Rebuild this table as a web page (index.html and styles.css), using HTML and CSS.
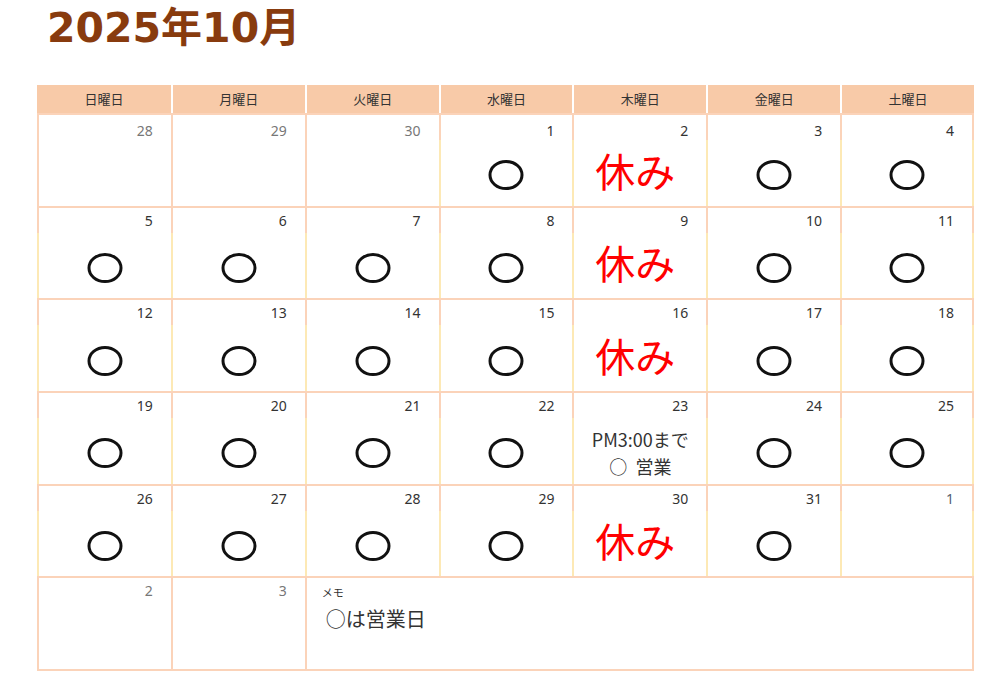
FILE: index.html
```html
<!DOCTYPE html>
<html lang="ja">
<head>
<meta charset="utf-8">
<title>2025年10月</title>
<link rel="stylesheet" href="styles.css">
</head>
<body>
<div class="page">
  <h1 class="title">2025年10月</h1>
  <div class="cal">
    <div class="hd">日曜日</div><div class="hd">月曜日</div><div class="hd">火曜日</div><div class="hd">水曜日</div><div class="hd">木曜日</div><div class="hd">金曜日</div><div class="hd">土曜日</div>

    <div class="cell other w1"><div class="date">28</div></div>
    <div class="cell other w1"><div class="date">29</div></div>
    <div class="cell other w1"><div class="date">30</div></div>
    <div class="cell cur w1"><div class="date">1</div><div class="body"><svg class="maru" viewBox="0 0 38 32"><ellipse cx="19" cy="16" rx="16" ry="13.5"/></svg></div></div>
    <div class="cell cur w1"><div class="date">2</div><div class="body"><span class="off">休み</span></div></div>
    <div class="cell cur w1"><div class="date">3</div><div class="body"><svg class="maru" viewBox="0 0 38 32"><ellipse cx="19" cy="16" rx="16" ry="13.5"/></svg></div></div>
    <div class="cell cur last w1"><div class="date">4</div><div class="body"><svg class="maru" viewBox="0 0 38 32"><ellipse cx="19" cy="16" rx="16" ry="13.5"/></svg></div></div>

    <div class="cell cur"><div class="date">5</div><div class="body"><svg class="maru" viewBox="0 0 38 32"><ellipse cx="19" cy="16" rx="16" ry="13.5"/></svg></div></div>
    <div class="cell cur"><div class="date">6</div><div class="body"><svg class="maru" viewBox="0 0 38 32"><ellipse cx="19" cy="16" rx="16" ry="13.5"/></svg></div></div>
    <div class="cell cur"><div class="date">7</div><div class="body"><svg class="maru" viewBox="0 0 38 32"><ellipse cx="19" cy="16" rx="16" ry="13.5"/></svg></div></div>
    <div class="cell cur"><div class="date">8</div><div class="body"><svg class="maru" viewBox="0 0 38 32"><ellipse cx="19" cy="16" rx="16" ry="13.5"/></svg></div></div>
    <div class="cell cur"><div class="date">9</div><div class="body"><span class="off">休み</span></div></div>
    <div class="cell cur"><div class="date">10</div><div class="body"><svg class="maru" viewBox="0 0 38 32"><ellipse cx="19" cy="16" rx="16" ry="13.5"/></svg></div></div>
    <div class="cell cur last"><div class="date">11</div><div class="body"><svg class="maru" viewBox="0 0 38 32"><ellipse cx="19" cy="16" rx="16" ry="13.5"/></svg></div></div>

    <div class="cell cur"><div class="date">12</div><div class="body"><svg class="maru" viewBox="0 0 38 32"><ellipse cx="19" cy="16" rx="16" ry="13.5"/></svg></div></div>
    <div class="cell cur"><div class="date">13</div><div class="body"><svg class="maru" viewBox="0 0 38 32"><ellipse cx="19" cy="16" rx="16" ry="13.5"/></svg></div></div>
    <div class="cell cur"><div class="date">14</div><div class="body"><svg class="maru" viewBox="0 0 38 32"><ellipse cx="19" cy="16" rx="16" ry="13.5"/></svg></div></div>
    <div class="cell cur"><div class="date">15</div><div class="body"><svg class="maru" viewBox="0 0 38 32"><ellipse cx="19" cy="16" rx="16" ry="13.5"/></svg></div></div>
    <div class="cell cur"><div class="date">16</div><div class="body"><span class="off">休み</span></div></div>
    <div class="cell cur"><div class="date">17</div><div class="body"><svg class="maru" viewBox="0 0 38 32"><ellipse cx="19" cy="16" rx="16" ry="13.5"/></svg></div></div>
    <div class="cell cur last"><div class="date">18</div><div class="body"><svg class="maru" viewBox="0 0 38 32"><ellipse cx="19" cy="16" rx="16" ry="13.5"/></svg></div></div>

    <div class="cell cur"><div class="date">19</div><div class="body"><svg class="maru" viewBox="0 0 38 32"><ellipse cx="19" cy="16" rx="16" ry="13.5"/></svg></div></div>
    <div class="cell cur"><div class="date">20</div><div class="body"><svg class="maru" viewBox="0 0 38 32"><ellipse cx="19" cy="16" rx="16" ry="13.5"/></svg></div></div>
    <div class="cell cur"><div class="date">21</div><div class="body"><svg class="maru" viewBox="0 0 38 32"><ellipse cx="19" cy="16" rx="16" ry="13.5"/></svg></div></div>
    <div class="cell cur"><div class="date">22</div><div class="body"><svg class="maru" viewBox="0 0 38 32"><ellipse cx="19" cy="16" rx="16" ry="13.5"/></svg></div></div>
    <div class="cell cur"><div class="date">23</div><div class="body"><p class="note">PM3:00まで<br>○&nbsp;&nbsp;営業</p></div></div>
    <div class="cell cur"><div class="date">24</div><div class="body"><svg class="maru" viewBox="0 0 38 32"><ellipse cx="19" cy="16" rx="16" ry="13.5"/></svg></div></div>
    <div class="cell cur last"><div class="date">25</div><div class="body"><svg class="maru" viewBox="0 0 38 32"><ellipse cx="19" cy="16" rx="16" ry="13.5"/></svg></div></div>

    <div class="cell cur"><div class="date">26</div><div class="body"><svg class="maru" viewBox="0 0 38 32"><ellipse cx="19" cy="16" rx="16" ry="13.5"/></svg></div></div>
    <div class="cell cur"><div class="date">27</div><div class="body"><svg class="maru" viewBox="0 0 38 32"><ellipse cx="19" cy="16" rx="16" ry="13.5"/></svg></div></div>
    <div class="cell cur"><div class="date">28</div><div class="body"><svg class="maru" viewBox="0 0 38 32"><ellipse cx="19" cy="16" rx="16" ry="13.5"/></svg></div></div>
    <div class="cell cur"><div class="date">29</div><div class="body"><svg class="maru" viewBox="0 0 38 32"><ellipse cx="19" cy="16" rx="16" ry="13.5"/></svg></div></div>
    <div class="cell cur"><div class="date">30</div><div class="body"><span class="off">休み</span></div></div>
    <div class="cell cur"><div class="date">31</div><div class="body"><svg class="maru" viewBox="0 0 38 32"><ellipse cx="19" cy="16" rx="16" ry="13.5"/></svg></div></div>
    <div class="cell cur last next"><div class="date">1</div></div>

    <div class="cell other"><div class="date">2</div></div>
    <div class="cell other"><div class="date">3</div></div>
    <div class="cell other last memo">
      <div class="memo-label">メモ</div>
      <div class="memo-text">○は営業日</div>
    </div>
  </div>
</div>
</body>
</html>
```

FILE: styles.css
```css
:root {
  --peach: #fbd3b9;
  --head: #f8caa8;
  --yellow: #fde9b5;
  --ink: #333333;
}

* { box-sizing: border-box; }

body {
  margin: 0;
  background: #ffffff;
  font-family: "Noto Sans", "Noto Sans CJK JP", sans-serif;
  color: var(--ink);
}

.page {
  padding: 0 0 0 37px;
}

.title {
  margin: 0;
  padding: 4px 0 0 10px;
  height: 85px;
  font-family: "DejaVu Sans", "Noto Sans CJK JP", sans-serif;
  font-weight: bold;
  font-size: 41px;
  line-height: 48px;
  color: #883b0e;
}

.cal {
  width: 937px;
  display: grid;
  grid-template-columns: repeat(7, 1fr);
  grid-template-rows: 28px repeat(6, 92.67px);
  border-bottom: 2px solid var(--peach);
}

.hd {
  background: var(--head);
  border-left: 2px solid #ffffff;
  font-family: "Noto Sans CJK JP", sans-serif;
  font-size: 13px;
  line-height: 28px;
  text-align: center;
  color: #333;
}
.hd:first-child { border-left: none; }

.cell {
  display: flex;
  flex-direction: column;
  padding: 2px 0 0 2px;
  background:
    linear-gradient(var(--peach), var(--peach)) left top / 100% 2px no-repeat,
    linear-gradient(var(--peach), var(--peach)) left top / 2px 100% no-repeat;
}

.cell.cur {
  background:
    linear-gradient(var(--peach), var(--peach)) left top / 100% 2px no-repeat,
    linear-gradient(to bottom, var(--peach) 0, var(--peach) 27px, var(--yellow) 27px) left top / 2px 100% no-repeat;
}

.cell.cur.last {
  padding-right: 2px;
  background:
    linear-gradient(var(--peach), var(--peach)) left top / 100% 2px no-repeat,
    linear-gradient(to bottom, var(--peach) 0, var(--peach) 27px, var(--yellow) 27px) left top / 2px 100% no-repeat,
    linear-gradient(to bottom, var(--peach) 0, var(--peach) 27px, var(--yellow) 27px) right top / 2px 100% no-repeat;
}

.cell.other.last {
  padding-right: 2px;
  background:
    linear-gradient(var(--peach), var(--peach)) left top / 100% 2px no-repeat,
    linear-gradient(var(--peach), var(--peach)) left top / 2px 100% no-repeat,
    linear-gradient(var(--peach), var(--peach)) right top / 2px 100% no-repeat;
}

.date {
  height: 25px;
  padding: 5px 18px 0 0;
  font-family: "Noto Sans", sans-serif;
  font-size: 14px;
  line-height: 16px;
  text-align: right;
  color: #333;
}

.w1 .date { padding-top: 8px; }

.other .date { color: #777; }
.next .date { color: #556070; }

.body {
  flex: 1;
  display: flex;
  align-items: center;
  justify-content: center;
  padding-top: 5px;
}

.maru {
  width: 38px;
  height: 32px;
}
.maru ellipse {
  fill: none;
  stroke: #111;
  stroke-width: 3;
}

.off {
  margin: -11px 10px 0 0;
  font-family: "Noto Sans CJK JP", sans-serif;
  font-size: 40px;
  line-height: 1;
  color: #ff0000;
}

.note {
  margin: 0;
  font-family: "Noto Sans CJK JP", sans-serif;
  font-size: 18px;
  line-height: 27px;
  text-align: center;
  color: #333;
}

.memo {
  grid-column: span 5;
  display: block;
  padding: 9px 0 0 17px;
}

.memo-label {
  font-family: "Noto Sans CJK JP", sans-serif;
  font-size: 11px;
  line-height: 14px;
  color: #333;
}

.memo-text {
  margin-top: 6px;
  padding-left: 4px;
  font-family: "Noto Sans CJK JP", sans-serif;
  font-size: 20px;
  line-height: 28px;
  color: #333;
}
```
